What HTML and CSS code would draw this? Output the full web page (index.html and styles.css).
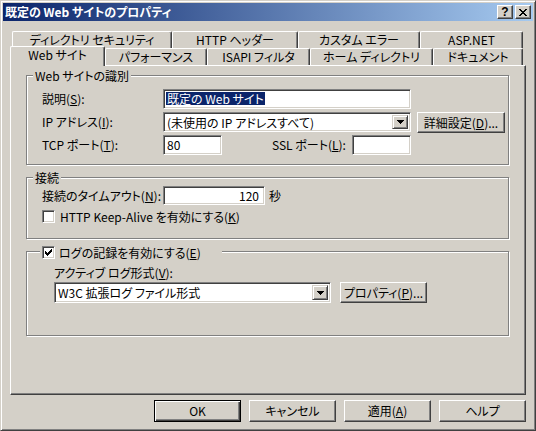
FILE: index.html
```html
<!DOCTYPE html>
<html lang="ja">
<head>
<meta charset="utf-8">
<title>既定の Web サイトのプロパティ</title>
<link rel="stylesheet" href="styles.css">
</head>
<body>
<div class="window">
  <div class="titlebar">
    <span class="title">既定の Web サイトのプロパティ</span>
    <div class="caption-buttons">
      <span class="cap-btn cap-help">?</span>
      <span class="cap-btn cap-close">
        <svg width="8" height="7" viewBox="0 0 8 7" shape-rendering="crispEdges"><path d="M0 0h2v1h-2zM6 0h2v1h-2zM1 1h2v1h-2zM5 1h2v1h-2zM2 2h4v1h-4zM3 3h2v1h-2zM2 4h4v1h-4zM1 5h2v1h-2zM5 5h2v1h-2zM0 6h2v1h-2zM6 6h2v1h-2z" fill="#000"/></svg>
      </span>
    </div>
  </div>

  <div class="client">
    <div class="tabrow">
      <div class="tab tab-security">ディレクトリ セキュリティ</div>
      <div class="tab tab-http">HTTP ヘッダー</div>
      <div class="tab tab-errors">カスタム エラー</div>
      <div class="tab tab-aspnet">ASP.NET</div>
    </div>
    <div class="tabrow">
      <div class="tab tab-site active">Web サイト</div>
      <div class="tab tab-perf">パフォーマンス</div>
      <div class="tab tab-isapi">ISAPI フィルタ</div>
      <div class="tab tab-home">ホーム ディレクトリ</div>
      <div class="tab tab-docs">ドキュメント</div>
    </div>

    <div class="panel">
      <div class="group group-ident">
        <div class="group-title">Web サイトの識別</div>
        <div class="ident-grid">
          <div class="row">
            <span class="label">説明(<u>S</u>):</span>
            <div class="edit edit-desc"><span class="selected-text">既定の Web サイト</span></div>
          </div>
          <div class="row">
            <span class="label">IP アドレス(<u>I</u>):</span>
            <div class="combo combo-ip">
              <span class="combo-text">(未使用の IP アドレスすべて)</span>
              <span class="drop-btn"><svg width="7" height="4" viewBox="0 0 7 4" shape-rendering="crispEdges"><path d="M0 0h7v1h-7zM1 1h5v1h-5zM2 2h3v1h-3zM3 3h1v1h-1z" fill="#000"/></svg></span>
            </div>
            <span class="button btn-advanced">詳細設定(<u>D</u>)...</span>
          </div>
          <div class="row">
            <span class="label">TCP ポート(<u>T</u>):</span>
            <div class="edit edit-port">80</div>
            <span class="label label-ssl">SSL ポート(<u>L</u>):</span>
            <div class="edit edit-port"></div>
          </div>
        </div>
      </div>

      <div class="group group-conn">
        <div class="group-title">接続</div>
        <div class="row row-timeout">
          <span class="label">接続のタイムアウト(<u>N</u>):</span>
          <div class="edit edit-timeout">120</div>
          <span class="unit">秒</span>
        </div>
        <div class="row row-check">
          <span class="checkbox"></span>
          <span class="check-text">HTTP Keep-Alive を有効にする(<u>K</u>)</span>
        </div>
      </div>

      <div class="group group-log">
        <div class="group-title group-title-check">
          <span class="checkbox">
            <svg width="7" height="7" viewBox="0 0 7 7" shape-rendering="crispEdges"><path d="M6 0h1v1h-1zM5 1h2v1h-2zM0 2h1v1h-1zM4 2h3v1h-3zM0 3h2v1h-2zM3 3h3v1h-3zM0 4h5v1h-5zM1 5h3v1h-3zM2 6h1v1h-1z" fill="#000"/></svg>
          </span>
          <span class="check-text">ログの記録を有効にする(<u>E</u>)</span>
        </div>
        <div class="log-label">アクティブ ログ形式(<u>V</u>):</div>
        <div class="row row-format">
          <div class="combo combo-format">
            <span class="combo-text">W3C 拡張ログ ファイル形式</span>
            <span class="drop-btn"><svg width="7" height="4" viewBox="0 0 7 4" shape-rendering="crispEdges"><path d="M0 0h7v1h-7zM1 1h5v1h-5zM2 2h3v1h-3zM3 3h1v1h-1z" fill="#000"/></svg></span>
          </div>
          <span class="button btn-props">プロパティ(<u>P</u>)...</span>
        </div>
      </div>
    </div>

    <div class="dialog-buttons">
      <span class="button default">OK</span>
      <span class="button">キャンセル</span>
      <span class="button">適用(<u>A</u>)</span>
      <span class="button">ヘルプ</span>
    </div>
  </div>
</div>
</body>
</html>
```

FILE: styles.css
```css
* {
  box-sizing: border-box;
}

html, body {
  margin: 0;
  background: #d4d0c8;
}

body {
  font-family: "Noto Sans CJK JP", sans-serif;
  font-size: 12px;
  line-height: 14px;
  color: #000;
  font-feature-settings: "palt";
}

u {
  text-decoration: underline;
  text-underline-offset: 1px;
}

/* outer frame of the dialog */
.window {
  width: 536px;
  height: 431px;
  border: 1px solid;
  border-color: #d4d0c8 #404040 #404040 #d4d0c8;
  box-shadow: inset 1px 1px #fff, inset -1px -1px #808080;
  padding: 2px;
  background: #d4d0c8;
}

/* caption */
.titlebar {
  height: 18px;
  display: flex;
  align-items: center;
  justify-content: space-between;
  padding: 0 2px;
  background: linear-gradient(to right, #0a246a, #a6caf0);
}

.title {
  color: #fff;
  font-weight: bold;
  font-size: 12px;
  line-height: 18px;
  white-space: nowrap;
}

.caption-buttons {
  display: flex;
  gap: 2px;
}

.cap-btn {
  width: 16px;
  height: 14px;
  display: flex;
  align-items: center;
  justify-content: center;
  background: #d4d0c8;
  border: 1px solid;
  border-color: #fff #404040 #404040 #fff;
  box-shadow: inset -1px -1px #808080;
}

.cap-help {
  font-family: "Liberation Sans", sans-serif;
  font-weight: bold;
  font-size: 12px;
  line-height: 12px;
}

/* body of the dialog */
.client {
  padding: 10px 7px 0 7px;
}

/* tab strip */
.tabrow {
  display: flex;
  height: 17px;
  margin-left: 2px;
}

.tab {
  height: 17px;
  border-top: 1px solid #fff;
  border-left: 1px solid #fff;
  border-right: 1px solid #404040;
  box-shadow: inset -1px 0 #808080;
  border-radius: 2px 2px 0 0;
  text-align: center;
  line-height: 15px;
  white-space: nowrap;
  background: #d4d0c8;
}

.tab.active {
  margin-left: -2px;
  margin-top: -2px;
  height: 20px;
  padding-top: 1px;
  line-height: 13px;
  position: relative;
  z-index: 1;
}

.tab-security { width: 160px; }
.tab-http { width: 126px; }
.tab-errors { width: 122px; }
.tab-aspnet { width: 103px; }
.tab-site { width: 95px; }
.tab-perf { width: 102px; }
.tab-isapi { width: 103px; }
.tab-home { width: 123px; }
.tab-docs { width: 90px; }

/* tab page */
.panel {
  width: 516px;
  height: 330px;
  border: 1px solid;
  border-color: #fff #404040 #404040 #fff;
  box-shadow: inset -1px -1px #808080;
  padding: 9px 16px 0 15px;
}

/* etched group boxes */
.group {
  border: 1px solid #808080;
  box-shadow: 1px 1px 0 #fff, inset 1px 1px 0 #fff;
  padding-left: 15px;
}

.group + .group {
  margin-top: 12px;
}

.group-ident { height: 90px; }
.group-conn { height: 62px; }
.group-log { height: 85px; padding-left: 27px; }

.group-title {
  width: fit-content;
  height: 13px;
  line-height: 13px;
  margin: -7px 0 0 -9px;
  padding: 0 2px;
  background: #d4d0c8;
  white-space: nowrap;
}

.group-title-check {
  display: flex;
  align-items: center;
  gap: 4px;
  width: 182px;
  height: 13px;
  margin: -6px 0 0 -14px;
}

.row {
  display: flex;
  align-items: center;
}

.label {
  width: 121px;
  white-space: nowrap;
}

.ident-grid {
  display: grid;
  grid-template-rows: 20px 20px 20px;
  row-gap: 3px;
  margin-top: 7px;
}

.ident-grid .row {
  align-items: flex-start;
  height: 20px;
}

.ident-grid .label {
  align-self: center;
}

/* sunken edit fields */
.edit,
.combo {
  background: #fff;
  border: 1px solid;
  border-color: #808080 #fff #fff #808080;
  box-shadow: inset 1px 1px #404040, inset -1px -1px #d4d0c8;
  height: 20px;
  white-space: nowrap;
}

.edit {
  padding: 2px 3px 0 3px;
  line-height: 14px;
}

.edit-desc { width: 248px; padding-left: 2px; }
.edit-port { width: 59px; }

.selected-text {
  display: inline-block;
  background: #0a246a;
  color: #fff;
  line-height: 13px;
  padding: 0 1px;
}

.label-ssl {
  width: 80px;
  margin-left: 50px;
}

.combo {
  display: flex;
  align-items: stretch;
  padding: 2px;
}

.combo-ip { width: 248px; }
.combo-format { width: 277px; height: 21px; }

.combo-text {
  flex: 1;
  padding-left: 1px;
  line-height: 15px;
}

.drop-btn {
  width: 16px;
  display: flex;
  align-items: center;
  justify-content: center;
  background: #d4d0c8;
  border: 1px solid;
  border-color: #d4d0c8 #404040 #404040 #d4d0c8;
  box-shadow: inset 1px 1px #fff, inset -1px -1px #808080;
}

/* push buttons */
.button {
  display: flex;
  align-items: center;
  justify-content: center;
  height: 21px;
  background: #d4d0c8;
  border: 1px solid;
  border-color: #fff #404040 #404040 #fff;
  box-shadow: inset -1px -1px #808080;
  white-space: nowrap;
}

.btn-advanced {
  width: 88px;
  margin-left: 6px;
}

.btn-props {
  width: 87px;
  margin-left: 9px;
}

/* connection group */
.row-timeout {
  margin-top: 2px;
  height: 19px;
}

.edit-timeout {
  width: 102px;
  height: 19px;
  text-align: right;
  padding: 2px 5px 0 3px;
}

.unit {
  margin-left: 4px;
}

.row-check {
  margin-top: 4px;
  height: 15px;
}

.checkbox {
  width: 13px;
  height: 13px;
  flex: none;
  display: flex;
  align-items: center;
  justify-content: center;
  background: #fff;
  border: 1px solid;
  border-color: #808080 #fff #fff #808080;
  box-shadow: inset 1px 1px #404040, inset -1px -1px #d4d0c8;
}

.check-text {
  margin-left: 5px;
  white-space: nowrap;
}

.group-title-check .check-text {
  margin-left: 0;
}

/* log group */
.log-label {
  margin-top: 7px;
  height: 14px;
  white-space: nowrap;
}

.row-format {
  margin-top: 2px;
  align-items: flex-start;
}

/* OK / cancel row */
.dialog-buttons {
  display: flex;
  justify-content: flex-end;
  gap: 8px;
  margin-top: 5px;
}

.dialog-buttons .button {
  width: 87px;
  height: 22px;
}

.button.default {
  border: 1px solid #000;
  box-shadow: inset 1px 1px #fff, inset -1px -1px #404040, inset -2px -2px #808080;
}
```
